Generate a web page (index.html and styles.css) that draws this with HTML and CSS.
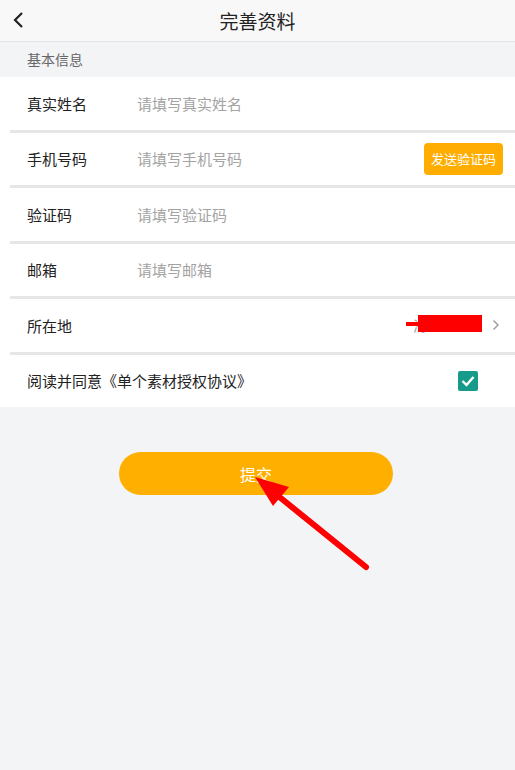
FILE: index.html
```html
<!DOCTYPE html>
<html lang="zh-CN">
<head>
    <meta charset="UTF-8">
    <meta name="viewport" content="width=device-width, initial-scale=1.0">
    <title>完善资料</title>
    <link rel="stylesheet" href="styles.css">
</head>
<body>

    <!-- Top bar -->
    <div class="top-bar">
        <span class="back">
            <svg width="12" height="18" viewBox="0 0 12 18"><path d="M10 2 L3 9 L10 16" fill="none" stroke="#222" stroke-width="2.2"/></svg>
        </span>
        <span class="title">完善资料</span>
    </div>

    <div class="section-title">基本信息</div>

    <div class="form-list">
        <div class="form-row">
            <span class="label">真实姓名</span>
            <input type="text" class="input-field" placeholder="请填写真实姓名">
        </div>
        <div class="form-row">
            <span class="label">手机号码</span>
            <input type="text" class="input-field" placeholder="请填写手机号码">
            <button class="code-btn">发送验证码</button>
        </div>
        <div class="form-row">
            <span class="label">验证码</span>
            <input type="text" class="input-field" placeholder="请填写验证码">
        </div>
        <div class="form-row">
            <span class="label">邮箱</span>
            <input type="text" class="input-field" placeholder="请填写邮箱">
        </div>
        <div class="form-row">
            <span class="label">所在地</span>
            <span class="location">
                <span class="loc-text">海</span>
                <span class="redact-line"></span>
                <span class="redact-box"></span>
            </span>
            <svg class="arrow-right" width="8" height="12" viewBox="0 0 8 12"><path d="M1.5 1.5 L6 6 L1.5 10.5" fill="none" stroke="#999" stroke-width="1.4"/></svg>
        </div>
        <div class="form-row last">
            <span class="agree">阅读并同意《单个素材授权协议》</span>
            <span class="check">
                <svg width="14" height="12" viewBox="0 0 14 12"><path d="M1.5 6 L5.5 10 L12.5 2" fill="none" stroke="#fff" stroke-width="2.4"/></svg>
            </span>
        </div>
    </div>

    <div class="submit-wrap">
        <button class="submit-btn">提交</button>
        <!-- red pointer arrow -->
        <svg class="pointer" width="130" height="110" viewBox="0 0 130 110">
            <line x1="119" y1="102" x2="30" y2="30" stroke="#ff0000" stroke-width="6" stroke-linecap="round"/>
            <polygon points="8,12 26,41 42,22" fill="#ff0000"/>
        </svg>
    </div>

</body>
</html>
```

FILE: styles.css
```css
body {
    font-family: "Noto Sans CJK SC", "Noto Sans", sans-serif;
    background-color: #f3f4f6;
    margin: 0;
    padding: 0;
    color: #333;
}
/* Top bar */
.top-bar {
    position: relative;
    height: 41px;
    background-color: #f8f8f8;
    border-bottom: 1px solid #e4e4e4;
    display: flex;
    align-items: center;
    justify-content: center;
}
.back {
    position: absolute;
    left: 12px;
    top: 10px;
}
.title {
    font-size: 19px;
    color: #222;
}
.section-title {
    height: 35px;
    line-height: 35px;
    padding-left: 27px;
    font-size: 14px;
    color: #666;
}
/* Form rows */
.form-list {
    background: white;
}
.form-row {
    display: flex;
    align-items: center;
    height: 52.5px;
    margin-left: 10px;
    padding-left: 17px;
    padding-right: 13px;
    border-bottom: 3px solid #e6e6e6;
}
.form-row.last {
    border-bottom: none;
}
.label {
    width: 110px;
    font-size: 15px;
    color: #222;
}
.input-field {
    flex: 1;
    border: none;
    outline: none;
    font-family: inherit;
    font-size: 15px;
    padding: 0;
    background: transparent;
}
.input-field::placeholder {
    color: #a3a3a3;
}
.code-btn {
    background-color: #ffad00;
    color: white;
    border: none;
    border-radius: 4px;
    font-family: inherit;
    font-size: 13px;
    height: 32px;
    padding: 0 7px;
    margin-right: -1px;
}
.location {
    position: relative;
    margin-left: auto;
    width: 76px;
    height: 20px;
    margin-right: 10px;
}
.loc-text {
    position: absolute;
    left: 7px;
    top: 0;
    font-size: 14px;
    color: #999;
}
.redact-line {
    position: absolute;
    left: 0;
    top: 7px;
    width: 20px;
    height: 4px;
    background: #ff0000;
}
.redact-box {
    position: absolute;
    left: 12px;
    top: 0;
    width: 64px;
    height: 17px;
    background: #ff0000;
}
.arrow-right {
    margin-right: 2px;
}
.agree {
    flex: 1;
    font-size: 15px;
    color: #222;
}
.check {
    width: 20px;
    height: 20px;
    background-color: #189a8a;
    border-radius: 2px;
    display: flex;
    align-items: center;
    justify-content: center;
    margin-right: 24px;
}
/* Submit */
.submit-wrap {
    position: relative;
    display: flex;
    justify-content: center;
    align-items: flex-start;
    padding-top: 45px;
    height: 160px;
}
.submit-btn {
    width: 274px;
    height: 43px;
    margin-right: 3px;
    background-color: #ffaf00;
    color: white;
    border: none;
    border-radius: 22px;
    font-family: inherit;
    font-size: 16px;
}
.pointer {
    position: absolute;
    left: 247px;
    top: 58px;
}
```
